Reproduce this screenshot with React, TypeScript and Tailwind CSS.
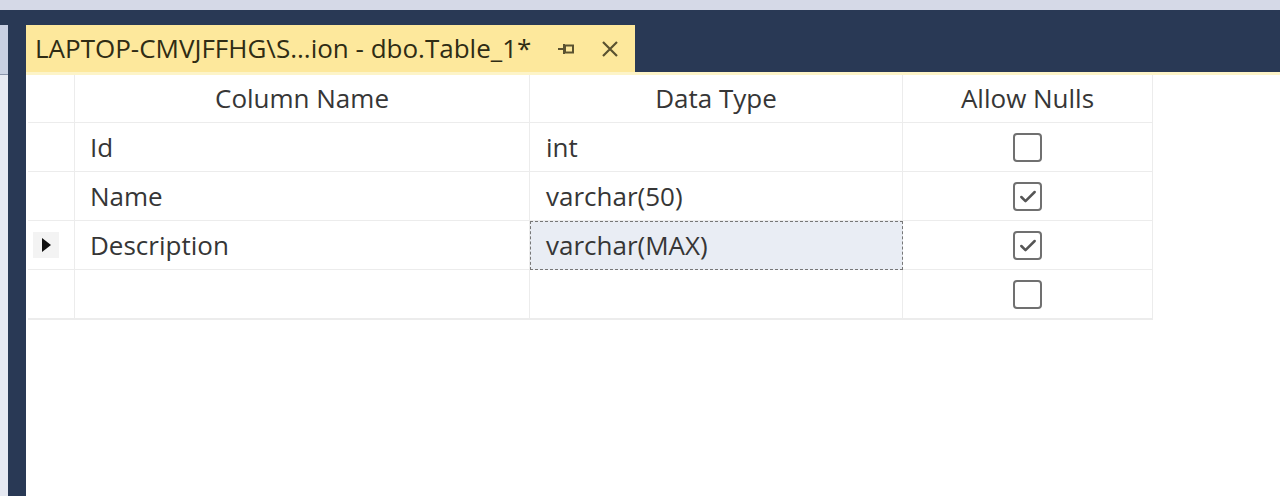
import { Check } from "lucide-react";

const rows = [
  { name: "Id", type: "int", nulls: false },
  { name: "Name", type: "varchar(50)", nulls: true },
  { name: "Description", type: "varchar(MAX)", nulls: true, current: true },
  { name: "", type: "", nulls: false },
];

function Box({ checked }: { checked: boolean }) {
  return (
    <div className="w-[29px] h-[29px] rounded-[4px] border-2 border-[#707070] bg-white flex items-center justify-center">
      {checked && <Check className="w-[20px] h-[20px] text-[#555] mt-[2px]" strokeWidth={3} />}
    </div>
  );
}

export default function App() {
  return (
    <div
      className="w-[1280px] h-[496px] flex flex-col bg-[#293955] overflow-hidden"
      style={{ fontFamily: '"Open Sans", "Noto Sans", sans-serif' }}
    >
      <div className="h-[10px] bg-[#d5d9e7] shrink-0" />
      <div className="flex flex-1 min-h-0">
        {/* left tool strip */}
        <div className="w-[8px] mt-[15px] flex flex-col">
          <div className="h-[50px] bg-[#c8d0e2] border-b border-[#8a94ab]" />
          <div className="flex-1 bg-[#e6e9f2]" />
        </div>
        <div className="w-[18px]" />

        <div className="flex-1 flex flex-col pt-[15px] min-w-0">
          {/* tab */}
          <div className="h-[47px] flex shrink-0">
            <div className="w-[609px] bg-[#fde89c] flex items-center pl-[9px] text-[26px] text-[#2f2c14]">
              <span>LAPTOP-CMVJFFHG\S...ion - dbo.Table_1*</span>
              <svg className="ml-[26px]" width="20" height="14" viewBox="0 0 20 14" fill="none" stroke="#5a5230" strokeWidth="2">
                <path d="M1 7h6" />
                <path d="M7 2v10" />
                <rect x="8" y="3.5" width="8" height="7" />
              </svg>
              <svg className="ml-[24px]" width="18" height="18" viewBox="0 0 18 18" stroke="#5a5230" strokeWidth="2.2">
                <path d="M2 2l14 14M16 2L2 16" />
              </svg>
            </div>
          </div>
          <div className="h-[3px] bg-[#fdf4c8] shrink-0" />

          {/* table designer grid */}
          <div className="flex-1 bg-white pl-[2px] text-[26px] text-[#363636]">
            <div className="grid grid-cols-[47px_455px_373px_250px] border-b border-[#ececec] w-fit">
              <div className="h-[48px] border-r border-b border-[#ececec]" />
              <div className="h-[48px] border-r border-b border-[#ececec] flex items-center justify-center">Column Name</div>
              <div className="h-[48px] border-r border-b border-[#ececec] flex items-center justify-center">Data Type</div>
              <div className="h-[48px] border-r border-b border-[#ececec] flex items-center justify-center">Allow Nulls</div>
              {rows.map((r, i) => (
                <div key={i} className="contents">
                  <div className="h-[49px] border-r border-b border-[#ececec] flex items-center pl-[5px]">
                    {r.current && (
                      <div className="w-[26px] h-[26px] bg-[#f3f3f3] flex items-center justify-center">
                        <svg width="10" height="14" viewBox="0 0 10 14">
                          <path d="M1 0l9 7-9 7z" fill="#111" />
                        </svg>
                      </div>
                    )}
                  </div>
                  <div className="h-[49px] border-r border-b border-[#ececec] flex items-center pl-[15px]">{r.name}</div>
                  <div
                    className={
                      r.current
                        ? "h-[49px] border border-dashed border-[#777] bg-[#e9edf4] flex items-center pl-[15px]"
                        : "h-[49px] border-r border-b border-[#ececec] flex items-center pl-[16px]"
                    }
                  >
                    {r.type}
                  </div>
                  <div className="h-[49px] border-r border-b border-[#ececec] flex items-center justify-center">
                    <Box checked={r.nulls} />
                  </div>
                </div>
              ))}
            </div>
          </div>
        </div>
      </div>
    </div>
  );
}
